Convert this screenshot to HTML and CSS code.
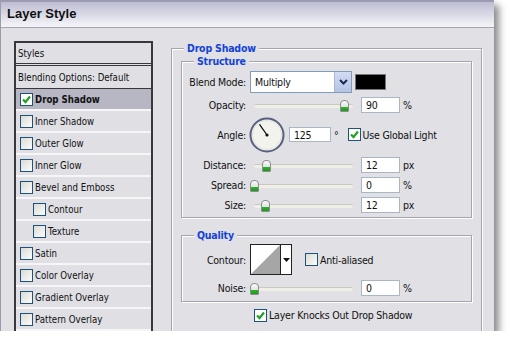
FILE: index.html
```html
<!DOCTYPE html>
<html lang="en">

<head>
    <meta charset="UTF-8">
    <title>Layer Style</title>
    <link rel="stylesheet" href="styles.css">
</head>

<body>

    <div class="window">
        <div class="titlebar">Layer Style</div>

        <div class="content">
            <ul class="styles-list">
                <li class="head">Styles</li>
                <li class="blend">Blending Options: Default</li>
                <li class="selected"><span class="check on"><svg width="11" height="11" viewBox="0 0 11 11"><path d="M2 5.5 L4.5 8 L9 2.5" fill="none" stroke="#21a121" stroke-width="2.2"/></svg></span>Drop Shadow</li>
                <li><span class="check"></span>Inner Shadow</li>
                <li><span class="check"></span>Outer Glow</li>
                <li><span class="check"></span>Inner Glow</li>
                <li><span class="check"></span>Bevel and Emboss</li>
                <li class="sub"><span class="check"></span>Contour</li>
                <li class="sub"><span class="check"></span>Texture</li>
                <li><span class="check"></span>Satin</li>
                <li><span class="check"></span>Color Overlay</li>
                <li><span class="check"></span>Gradient Overlay</li>
                <li><span class="check"></span>Pattern Overlay</li>
            </ul>

            <div class="panel">
                <fieldset class="group outer">
                    <legend>Drop Shadow</legend>

                    <fieldset class="group structure">
                        <legend>Structure</legend>

                        <div class="row blend-row">
                            <label>Blend Mode:</label>
                            <div class="select">
                                <span>Multiply</span>
                                <span class="arrow"><svg width="9" height="6" viewBox="0 0 9 6"><path d="M1 1 L4.5 4.5 L8 1" fill="none" stroke="#1e2a52" stroke-width="2"/></svg></span>
                            </div>
                            <span class="swatch"></span>
                        </div>

                        <div class="row">
                            <label>Opacity:</label>
                            <div class="slider"><span class="track"></span><span class="thumb" style="left: 90px"></span></div>
                            <span class="field">90</span>
                            <span class="unit">%</span>
                        </div>

                        <div class="row angle-row">
                            <label>Angle:</label>
                            <svg class="dial" width="36" height="36" viewBox="0 0 36 36">
                                <circle cx="18" cy="18" r="16.5" fill="#f3f3ee" stroke="#56607e" stroke-width="2"/>
                                <circle cx="18" cy="18" r="14.5" fill="none" stroke="#e2e2dc" stroke-width="1"/>
                                <line x1="18" y1="18" x2="10.5" y2="7.3" stroke="#111" stroke-width="1.3"/>
                                <circle cx="18" cy="18" r="1.6" fill="#111"/>
                            </svg>
                            <span class="field angle">125</span>
                            <span class="unit deg">°</span>
                            <span class="check on"><svg width="11" height="11" viewBox="0 0 11 11"><path d="M2 5.5 L4.5 8 L9 2.5" fill="none" stroke="#21a121" stroke-width="2.2"/></svg></span>
                            <span class="check-label">Use Global Light</span>
                        </div>

                        <div class="row distance-row">
                            <label>Distance:</label>
                            <div class="slider"><span class="track"></span><span class="thumb" style="left: 12px"></span></div>
                            <span class="field">12</span>
                            <span class="unit">px</span>
                        </div>

                        <div class="row">
                            <label>Spread:</label>
                            <div class="slider"><span class="track"></span><span class="thumb" style="left: 0px"></span></div>
                            <span class="field">0</span>
                            <span class="unit">%</span>
                        </div>

                        <div class="row">
                            <label>Size:</label>
                            <div class="slider"><span class="track"></span><span class="thumb" style="left: 11px"></span></div>
                            <span class="field">12</span>
                            <span class="unit">px</span>
                        </div>
                    </fieldset>

                    <fieldset class="group quality">
                        <legend>Quality</legend>

                        <div class="row contour-row">
                            <label>Contour:</label>
                            <div class="contour">
                                <svg width="31" height="31" viewBox="0 0 31 31">
                                    <rect x="0.5" y="0.5" width="30" height="30" fill="#fff" stroke="#222"/>
                                    <polygon points="1,30 30,1 30,30" fill="#a6a6a6"/>
                                </svg>
                                <span class="contour-arrow"><svg width="7" height="4" viewBox="0 0 7 4"><path d="M0 0 H7 L3.5 4 Z" fill="#111"/></svg></span>
                            </div>
                            <span class="check aa"></span>
                            <span class="check-label">Anti-aliased</span>
                        </div>

                        <div class="row noise-row">
                            <label>Noise:</label>
                            <div class="slider"><span class="track"></span><span class="thumb" style="left: 0px"></span></div>
                            <span class="field">0</span>
                            <span class="unit">%</span>
                        </div>
                    </fieldset>

                    <div class="row knock-row">
                        <span class="check on"><svg width="11" height="11" viewBox="0 0 11 11"><path d="M2 5.5 L4.5 8 L9 2.5" fill="none" stroke="#21a121" stroke-width="2.2"/></svg></span>
                        <span class="check-label">Layer Knocks Out Drop Shadow</span>
                    </div>
                </fieldset>
            </div>
        </div>
    </div>

</body>

</html>
```

FILE: styles.css
```css
* {
    box-sizing: border-box;
}

body {
    margin: 0;
    background: #fff;
    font-family: "DejaVu Sans Condensed", "Liberation Sans", sans-serif;
    font-size: 10.5px;
    letter-spacing: -0.2px;
    color: #111;
}

.window {
    width: 494px;
    height: 331px;
    background: #e0e0e5;
    border-left: 1px solid #9c9cac;
    box-shadow: 5px 5px 7px rgba(0, 0, 0, 0.45);
    overflow: hidden;
    display: flex;
    flex-direction: column;
}

.titlebar {
    flex: none;
    height: 28px;
    padding-left: 6px;
    border-top: 2px solid #9a9ab0;
    border-bottom: 1px solid #a4a4b4;
    background: linear-gradient(#bdbdd3, #dcdce8 55%, #f6f6f9);
    font: bold 13px "Liberation Sans", sans-serif;
    line-height: 24px;
    letter-spacing: 0;
    color: #111;
}

.content {
    flex: 1;
    display: flex;
    padding: 13px 0 0 13px;
}

/* left list of styles */

.styles-list {
    list-style: none;
    margin: 0;
    padding: 0;
    width: 139px;
    flex: none;
    border: 2px solid #38383c;
    border-bottom: none;
    background: #dfdfe4;
    font-size: 9.6px;
    letter-spacing: 0;
}

.styles-list li {
    height: 22px;
    display: flex;
    align-items: center;
    gap: 2px;
    padding-left: 4px;
    border-bottom: 2px solid #f6f6f8;
}

.styles-list .head {
    height: 23px;
    padding-left: 2px;
    border-bottom: 3px double #38383c;
}

.styles-list .blend {
    height: 23px;
    padding-left: 2px;
    border-bottom: 1px solid #38383c;
}

.styles-list .selected {
    background: #b7b7c3;
    font-weight: bold;
}

.styles-list .sub {
    padding-left: 17px;
}

.check {
    width: 13px;
    height: 13px;
    flex: none;
    border: 1px solid #1c5180;
    background: linear-gradient(135deg, #dcdcd6, #fbfbf9);
    display: flex;
    align-items: center;
    justify-content: center;
}

.check.on {
    background: #fff;
}

/* right panel */

.panel {
    margin-left: 18px;
    width: 311px;
    flex: none;
}

.group {
    margin: 0;
    padding: 0;
    border: 1px solid #a5a5ad;
    box-shadow: inset 1px 1px 0 #fff, 1px 1px 0 #fff;
}

.group legend {
    margin-left: 12px;
    padding: 0 3px;
    background: #e0e0e5;
    color: #1443d6;
    font-weight: bold;
    line-height: 13px;
}

.outer {
    margin-top: 1px;
    height: 300px;
    padding: 0 9px;
}

.outer > legend {
    margin-left: 3px;
}

.structure {
    padding-bottom: 4px;
}

.quality {
    margin-top: 11px;
    padding-bottom: 5px;
}

.row {
    display: flex;
    align-items: center;
    height: 16px;
    margin-top: 4px;
}

.row label {
    width: 64px;
    margin-right: 4px;
    text-align: right;
    flex: none;
}

.blend-row {
    height: 22px;
    margin-top: 3px;
}

.angle-row {
    height: 35px;
}

.distance-row {
    margin-top: 5px;
}

.contour-row {
    height: 31px;
    margin-top: 2px;
}

.noise-row {
    margin-top: 5px;
}

.knock-row {
    margin-top: 5px;
    margin-left: 73px;
}

.select {
    width: 102px;
    height: 22px;
    display: flex;
    align-items: center;
    justify-content: space-between;
    padding-left: 4px;
    background: #fff;
    border: 1px solid #7f9db9;
}

.select .arrow {
    width: 17px;
    height: 20px;
    display: flex;
    align-items: center;
    justify-content: center;
    background: linear-gradient(#d4dcf2, #b4c2e4);
    border-left: 1px solid #a8b8d8;
}

.swatch {
    width: 31px;
    height: 16px;
    margin-left: 3px;
    background: #000;
    border: 1px solid #777;
}

.slider {
    position: relative;
    width: 103px;
    height: 16px;
    flex: none;
}

.slider .track {
    position: absolute;
    left: 4px;
    right: 0;
    top: 7px;
    height: 4px;
    background: #efefe7;
    border-top: 1px solid #c9c9bc;
    border-radius: 2px;
}

.slider .thumb {
    position: absolute;
    top: 3px;
    width: 9px;
    height: 12px;
    border: 1px solid #8c8c8c;
    border-radius: 4px 4px 1px 1px;
    background: linear-gradient(#fbfbfb, #e4e4e4 55%, #2fb02f 60%, #1f9a1f);
}

.field {
    width: 39px;
    height: 16px;
    margin-left: 8px;
    padding-left: 4px;
    background: #fff;
    border: 1px solid #a9b6c6;
    line-height: 14px;
    flex: none;
}

.unit {
    margin-left: 3px;
}

.dial {
    flex: none;
    margin-left: -1px;
}

.field.angle {
    width: 42px;
    height: 15px;
    margin-left: 4px;
}

.unit.deg {
    margin-right: 9px;
}

.check-label {
    margin-left: 2px;
}

.contour {
    display: flex;
    width: 42px;
    height: 31px;
    flex: none;
}

.contour-arrow {
    width: 11px;
    height: 31px;
    display: flex;
    align-items: center;
    justify-content: center;
    background: #fff;
    border: 1px solid #222;
    border-left: none;
}

.check.aa {
    margin-left: 13px;
}
```
